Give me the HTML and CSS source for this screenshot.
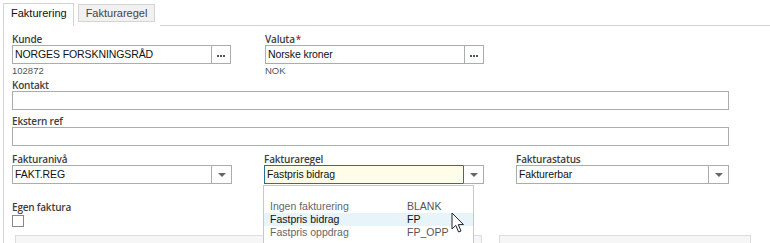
FILE: index.html
```html
<!DOCTYPE html>
<html>
<head>
<meta charset="utf-8">
<link rel="stylesheet" href="styles.css">
</head>
<body>
<div class="tabs">
  <div class="tab active">Fakturering</div>
  <div class="tab">Fakturaregel</div>
  <div class="tab-rest"></div>
</div>
<div class="panel">
  <div class="row two">
    <div class="field">
      <div class="label">Kunde</div>
      <div class="lookup">
        <div class="input">NORGES FORSKNINGSRÅD</div>
        <div class="dots"><span></span><span></span><span></span></div>
      </div>
      <div class="sub">102872</div>
    </div>
    <div class="field">
      <div class="label">Valuta<span class="req">*</span></div>
      <div class="lookup">
        <div class="input">Norske kroner</div>
        <div class="dots"><span></span><span></span><span></span></div>
      </div>
      <div class="sub">NOK</div>
    </div>
  </div>
  <div class="field wide">
    <div class="label">Kontakt</div>
    <div class="input full"></div>
  </div>
  <div class="field wide second">
    <div class="label">Ekstern ref</div>
    <div class="input full"></div>
  </div>
  <div class="row three">
    <div class="field">
      <div class="label">Fakturanivå</div>
      <div class="select">
        <div class="input">FAKT.REG</div>
        <div class="arrow"><i></i></div>
      </div>
    </div>
    <div class="field dd-host">
      <div class="label">Fakturaregel</div>
      <div class="select focus">
        <div class="input">Fastpris bidrag</div>
        <div class="arrow"><i></i></div>
      </div>
      <div class="dropdown">
        <div class="opt"><span class="name">Ingen fakturering</span><span class="code">BLANK</span></div>
        <div class="opt hl"><span class="name">Fastpris bidrag</span><span class="code">FP</span></div>
        <div class="opt"><span class="name">Fastpris oppdrag</span><span class="code">FP_OPP</span></div>
        <svg class="cursor" width="14" height="22" viewBox="0 0 14 22"><path d="M1 1 L1 17 L4.8 13.4 L7.6 20 L10 19 L7.3 12.6 L12.5 12.6 Z" fill="#fff" stroke="#222" stroke-width="1" stroke-linejoin="round"/></svg>
      </div>
    </div>
    <div class="field">
      <div class="label">Fakturastatus</div>
      <div class="select">
        <div class="input">Fakturerbar</div>
        <div class="arrow"><i></i></div>
      </div>
    </div>
  </div>
  <div class="field check">
    <div class="label">Egen faktura</div>
    <div class="box"></div>
  </div>
  <div class="bottom">
    <div class="card left"></div>
    <div class="card right"></div>
  </div>
</div>
</body>
</html>
```
FILE: styles.css
```css
* { box-sizing: border-box; }
html, body { margin: 0; padding: 0; background: #fff; overflow: hidden; }
body {
  width: 770px; height: 243px;
  font-family: "Liberation Sans", Arial, sans-serif;
  font-size: 10.5px; color: #111;
}
.tabs {
  display: flex; align-items: flex-end;
  padding: 3px 0 0 3px; height: 26px;
}
.tab {
  height: 18px; line-height: 16px;
  padding: 0 7px 0 7px; margin-right: 5px;
  font-size: 11px; color: #444;
  background: #f1f1f1; border: 1px solid #d4d4d4;
  align-self: flex-start; margin-top: 1px;
}
.tab.active {
  height: 23px; margin-top: 0; line-height: 19px;
  background: #fff; color: #111; border-bottom: none;
  padding: 0 6px 0 7px; margin-right: 4px;
  align-self: flex-end;
}
.tab-rest { flex: 1; border-bottom: 1px solid #d4d4d4; align-self: flex-end; height: 1px; }
.panel {
  margin-left: 3px; border-left: 1px solid #d8d8d8;
  padding: 8px 0 0 8px; height: 217px;
}
.row { display: flex; }
.row.two .field { width: 220px; margin-right: 33px; }
.row.three .field { width: 220px; margin-right: 32px; }
.row.three .field:last-child { width: 213px; }
.label {
  font-family: "Open Sans", "Liberation Sans", sans-serif;
  font-weight: 600; font-size: 10px; color: #3d3d3d;
  line-height: 11px; height: 11px; letter-spacing: -0.2px;
}
.req { color: #b0223a; margin-left: 1px; }
.lookup, .select { display: flex; height: 19px; }
.input {
  border: 1px solid #a9adb0; height: 19px; line-height: 17px;
  padding-left: 2px; color: #111; flex: 1; background: #fff;
  white-space: nowrap; overflow: hidden; letter-spacing: -0.1px;
}
.lookup .input { width: 200px; flex: none; }
.dots {
  width: 20px; border: 1px solid #a9adb0;
  margin-left: -1px; display: flex; align-items: center; justify-content: center; gap: 1px;
  padding-top: 2px;
}
.dots span { width: 2px; height: 2px; background: #555; }
.sub { font-size: 9.5px; color: #555; line-height: 12px; margin-top: 1px; }
.wide { margin-top: 3px; }
.wide.second { margin-top: 6px; }
.input.full { width: 717px; }
.row.three { margin-top: 8px; }
.select .input { border-right: none; }
.arrow {
  width: 21px; border: 1px solid #a9adb0; display: flex; align-items: center; justify-content: center;
  background: #fff;
}
.arrow i {
  width: 0; height: 0; border-left: 4px solid transparent; border-right: 4px solid transparent;
  border-top: 4px solid #666; margin-top: 1px;
}
.select.focus .input { background: #fffde8; border-color: #2b6e96; border-right: none; }
.select.focus .arrow { border-left-color: #2b6e96; }
.dd-host { position: relative; }
.dropdown {
  position: absolute; left: -1px; top: 31px; width: 211px; height: 60px;
  background: #fff; border: 1px solid #c8c8c8; border-bottom: none;
  padding-top: 14px; z-index: 5;
}
.opt { display: flex; height: 13px; line-height: 13px; font-size: 10.5px; color: #666; }
.opt .name { width: 143px; padding-left: 6px; }
.opt .code { color: #555; }
.opt.hl { background: #e7f4fa; color: #111; }
.opt.hl .code { color: #111; }
.cursor { position: absolute; left: 187px; top: 26px; }
.check { margin-top: 18px; }
.check .label { margin-bottom: 2px; }
.box { width: 12px; height: 12px; border: 1px solid #888; background: #fff; }
.bottom { display: flex; margin-top: 8px; margin-left: 3px; }
.card { height: 20px; background: #f6f6f6; border: 1px solid #dcdcdc; }
.card.left { width: 467px; }
.card.right { width: 252px; margin-left: 17px; }
```
